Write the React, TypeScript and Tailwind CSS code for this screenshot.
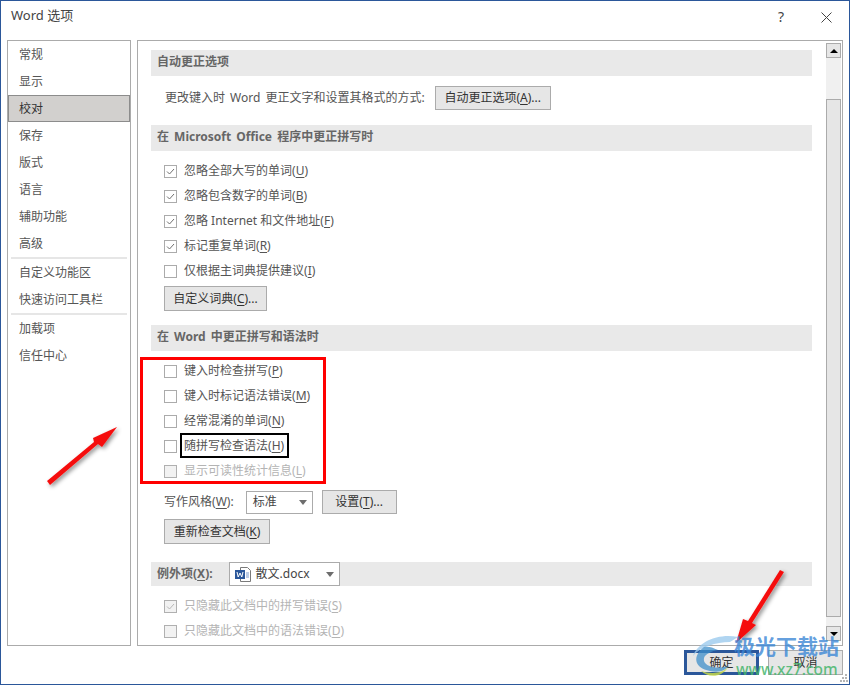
import React from "react";

const font = { fontFamily: '"Noto Sans","Noto Sans CJK SC",sans-serif' };

function Label({ text, k, tail = ")", disabled }: { text: string; k: string; tail?: string; disabled?: boolean }) {
  return (
    <span className={disabled ? "text-[#b4b4b4]" : ""}>
      {text}(<span className="underline underline-offset-2">{k}</span>{tail}
    </span>
  );
}

function Check({ checked, disabled, children }: { checked?: boolean; disabled?: boolean; children: React.ReactNode }) {
  return (
    <div className="flex h-[25px] items-center gap-[7px] pl-[13px] text-[12px] text-[#555]">
      <span className={`flex h-[13px] w-[13px] shrink-0 items-center justify-center border ${disabled ? "border-[#b0b0b0] bg-[#f2f2f2]" : "border-[#ababab] bg-white"}`}>
        {checked && (
          <svg width="11" height="11" viewBox="0 0 11 11" fill="none" stroke={disabled ? "#b8b8b8" : "#707070"} strokeWidth="1">
            <path d="M2 5.5 L4.5 8 L9 3" />
          </svg>
        )}
      </span>
      <span className="pb-[2px]">{children}</span>
    </div>
  );
}

function Header({ children }: { children: React.ReactNode }) {
  return <div className="flex h-[26px] items-center bg-[#e9e9e9] pb-[2px] pl-[6px] text-[12px] font-bold text-[#666] [word-spacing:2px]">{children}</div>;
}

function Btn({ className, primary, children }: { className: string; primary?: boolean; children: React.ReactNode }) {
  return (
    <div className={`flex items-center justify-center bg-[#e6e6e6] text-[12px] text-[#333] ${primary ? "border-[3px] border-[#2b579a]" : "border border-[#ababab]"} ${className}`}>
      {children}
    </div>
  );
}

function Caret() {
  return <span className="h-0 w-0 border-x-[4px] border-t-[5px] border-x-transparent border-t-[#6d6d6d]" />;
}

function Nav({ label, active }: { label: string; active?: boolean }) {
  return (
    <div className={`flex h-[27px] items-center text-[12px] ${active ? "border border-[#8c8c8c] bg-[#d2d0ce] pl-[10px] text-[#333]" : "pl-[11px] text-[#555]"}`}>
      {label}
    </div>
  );
}

export default function App() {
  return (
    <div className="relative flex h-[685px] w-[850px] flex-col overflow-hidden border border-[#2b579a] bg-white" style={font}>
      <div className="flex h-[39px] shrink-0 items-start justify-between pl-[10px] pr-[17px] pt-[5px]">
        <span className="text-[13px] text-[#444]">Word 选项</span>
        <div className="flex items-center gap-[37px] pt-[1px] text-[#444]">
          <span className="text-[14px] leading-[20px]">?</span>
          <svg width="11" height="11" viewBox="0 0 11 11" stroke="#444" strokeWidth="1"><path d="M0.5 0.5 L10.5 10.5 M10.5 0.5 L0.5 10.5" /></svg>
        </div>
      </div>

      <div className="flex h-[606px] shrink-0 gap-[6px] pl-[6px]">
        <div className="flex w-[124px] shrink-0 flex-col border border-[#ababab]">
          <Nav label="常规" />
          <Nav label="显示" />
          <Nav label="校对" active />
          <Nav label="保存" />
          <Nav label="版式" />
          <Nav label="语言" />
          <Nav label="辅助功能" />
          <Nav label="高级" />
          <div className="mx-[3px] h-[2px] bg-[#e6e6e6]" />
          <Nav label="自定义功能区" />
          <Nav label="快速访问工具栏" />
          <div className="mx-[3px] h-[2px] bg-[#e6e6e6]" />
          <Nav label="加载项" />
          <Nav label="信任中心" />
        </div>

        <div className="flex w-[706px] shrink-0 border border-[#ababab]">
          <div className="w-[674px] shrink-0 pl-[13px] pt-[9px]">
            <Header>自动更正选项</Header>
            <div className="mt-[10px] flex h-[24px] items-center pl-[14px] text-[12px] text-[#555]">
              <span className="[word-spacing:2px]">更改键入时 Word 更正文字和设置其格式的方式:</span>
              <Btn className="ml-[10px] h-[24px] w-[116px]"><Label text="自动更正选项" k="A" tail=")..." /></Btn>
            </div>

            <div className="mt-[15px]"><Header>在 Microsoft Office 程序中更正拼写时</Header></div>
            <div className="mt-[8px]">
              <Check checked><Label text="忽略全部大写的单词" k="U" /></Check>
              <Check checked><Label text="忽略包含数字的单词" k="B" /></Check>
              <Check checked><Label text="忽略 Internet 和文件地址" k="F" /></Check>
              <Check checked><Label text="标记重复单词" k="R" /></Check>
              <Check><Label text="仅根据主词典提供建议" k="I" /></Check>
            </div>
            <Btn className="ml-[13px] mt-[2px] h-[25px] w-[103px]"><Label text="自定义词典" k="C" tail=")..." /></Btn>

            <div className="mt-[14px]"><Header>在 Word 中更正拼写和语法时</Header></div>
            <div className="relative mt-[8px]">
              <Check><Label text="键入时检查拼写" k="P" /></Check>
              <Check><Label text="键入时标记语法错误" k="M" /></Check>
              <Check><Label text="经常混淆的单词" k="N" /></Check>
              <Check>
                <span className="relative">
                  <Label text="随拼写检查语法" k="H" />
                  <span className="absolute -bottom-[4px] -left-[4px] -right-[5px] -top-[4px] border-2 border-black" />
                </span>
              </Check>
              <Check disabled><Label text="显示可读性统计信息" k="L" disabled /></Check>
              <div className="pointer-events-none absolute -left-[11px] -top-[2px] h-[127px] w-[186px] border-[3px] border-[#ff0000]" />
            </div>

            <div className="mt-[6px] flex h-[24px] items-center pl-[13px] text-[12px] text-[#555]">
              <Label text="写作风格" k="W" tail="):" />
              <div className="ml-[12px] flex h-[23px] w-[67px] items-center justify-between border border-[#ababab] bg-white pl-[6px] pr-[5px] text-[#444]">
                标准<Caret />
              </div>
              <Btn className="ml-[9px] h-[24px] w-[75px]"><Label text="设置" k="T" tail=")..." /></Btn>
            </div>
            <Btn className="ml-[13px] mt-[5px] h-[25px] w-[106px]"><Label text="重新检查文档" k="K" /></Btn>

            <div className="mt-[18px] flex h-[24px] items-center bg-[#e9e9e9] pl-[6px] text-[12px] font-bold text-[#666]">
              <Label text="例外项" k="X" tail="):" />
              <div className="ml-[16px] flex h-[24px] w-[111px] items-center justify-between border border-[#ababab] bg-white px-[5px] font-normal text-[#444]">
                <span className="flex items-center gap-[4px]">
                  <svg width="17" height="15" viewBox="0 0 17 15">
                    <path d="M5.5 .5 H12.5 L15.5 3.5 V14.5 H5.5 Z" fill="#fff" stroke="#7a7a7a" />
                    <rect x="0" y="3" width="10" height="9" fill="#2b579a" />
                    <path d="M2 5 L3.2 10 L5 6 L6.8 10 L8 5" fill="none" stroke="#fff" strokeWidth="1" />
                    <path d="M11 6 H14 M11 8 H14 M11 10 H14" stroke="#7f9ccb" />
                  </svg>
                  散文.docx
                </span>
                <Caret />
              </div>
            </div>
            <div className="mt-[8px]">
              <Check checked disabled><Label text="只隐藏此文档中的拼写错误" k="S" disabled /></Check>
              <Check disabled><Label text="只隐藏此文档中的语法错误" k="D" disabled /></Check>
            </div>
          </div>

          <div className="ml-[14px] mt-[2px] flex h-[598px] w-[15px] flex-col bg-[#f0f0f0]">
            <div className="flex h-[15px] shrink-0 items-center justify-center border border-[#ababab] bg-[#e6e6e6]">
              <span className="h-0 w-0 border-x-[4px] border-b-[4px] border-x-transparent border-b-black" />
            </div>
            <div className="mt-[41px] h-[520px] border border-[#ababab] bg-[#e6e6e6]" />
            <div className="mt-[9px] flex h-[15px] shrink-0 items-center justify-center border border-[#ababab] bg-[#e6e6e6]">
              <span className="h-0 w-0 border-x-[4px] border-t-[4px] border-x-transparent border-t-black" />
            </div>
          </div>
        </div>
      </div>

      <div className="mt-[4px] flex justify-end gap-[9px] pr-[6px]">
        <Btn primary className="h-[25px] w-[75px]">确定</Btn>
        <Btn className="h-[25px] w-[75px]">取消</Btn>
      </div>

      {/* annotations */}
      <svg className="pointer-events-none absolute -left-px -top-px" width="850" height="685" viewBox="0 0 850 685">
        <defs>
          <filter id="s" x="-30%" y="-30%" width="160%" height="160%">
            <feDropShadow dx="2" dy="2" stdDeviation="2" floodColor="#000" floodOpacity="0.45" />
          </filter>
        </defs>
        <g fill="#f50f0f" filter="url(#s)">
          <path d="M47 481 L94 442 L93 438 L117 427 L102 447 L98 444 L50 485 Z" />
          <path d="M780 570 L748 621 L743 619 L736 643 L756 625 L752 623 L784 572 Z" />
        </g>
      </svg>
      <div className="pointer-events-none absolute left-[691px] top-[633px] z-10 h-[48px] w-[155px]">
        <svg className="absolute left-0 top-0" width="48" height="44" viewBox="0 0 48 44">
          <path d="M46 3 C26 -1 6 8 1 22 C8 13 24 8 38 8 Z" fill="#9ccbed" opacity="0.8" />
          <path d="M12 13 C0 22 2 34 18 37 C28 39 34 36 36 32 C24 36 10 32 12 24 C13 20 20 17 26 16 C20 13 16 12 12 13 Z" fill="#3f8fc9" opacity="0.75" />
          <path d="M9 37 C16 44 30 44 36 33 C30 40 18 40 9 37 Z" fill="#c5d84a" opacity="0.85" />
        </svg>
        <div className="absolute left-[42px] top-[-2px] whitespace-nowrap text-[21px] font-bold leading-[28px] text-[#3a86d6]/80">极光下载站</div>
        <div className="absolute left-[44px] top-[24px] whitespace-nowrap text-[15.5px] font-medium leading-[22px] text-[#45b56c]/85">www.xz7.com</div>
      </div>
      <svg className="absolute bottom-[2px] right-[1px]" width="8" height="8" viewBox="0 0 8 8" fill="#b5b5b5">
        <rect x="5" y="0" width="2" height="2" /><rect x="2" y="3" width="2" height="2" /><rect x="5" y="3" width="2" height="2" />
        <rect x="0" y="6" width="2" height="2" /><rect x="3" y="6" width="2" height="2" /><rect x="6" y="6" width="2" height="2" />
      </svg>
    </div>
  );
}
